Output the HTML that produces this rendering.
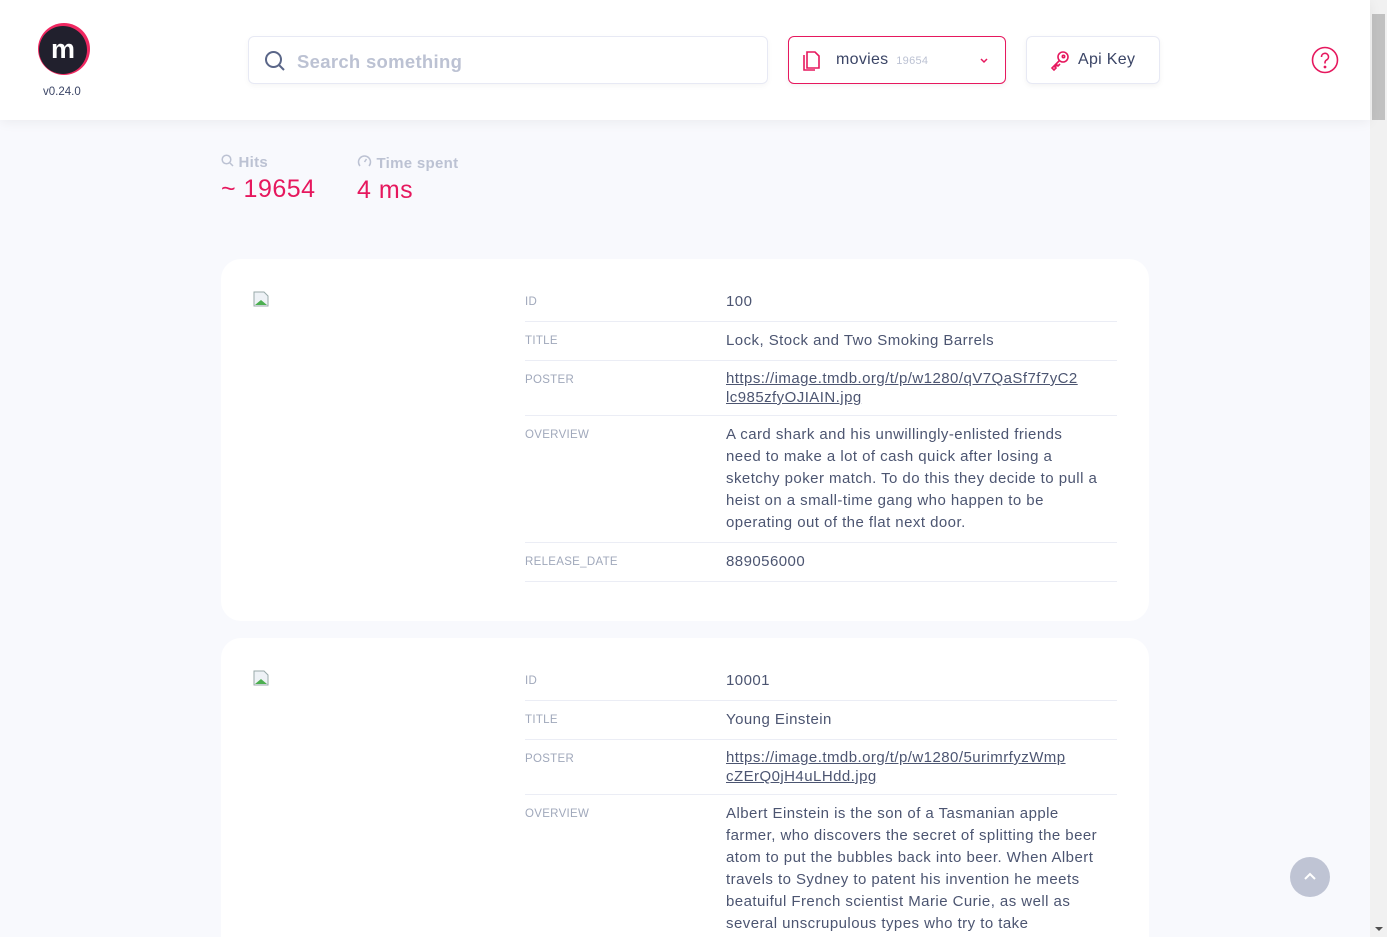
<!DOCTYPE html>
<html><head><meta charset="utf-8"><style>
*{box-sizing:border-box;margin:0;padding:0}
html,body{width:1387px;height:937px;overflow:hidden}
body{background:#f8f9fd;font-family:"Liberation Sans",sans-serif;color:#4c5571;position:relative}
.sb{position:absolute;right:0;top:0;width:17px;height:937px;background:#f1f1f1}
.sb .th{position:absolute;left:2px;top:14px;width:13px;height:106px;background:#c1c1c1}
.hdr{position:absolute;left:0;top:0;width:1370px;height:120px;background:#fff;box-shadow:0 2px 12px rgba(0,0,0,.06);z-index:2}
.logo{position:absolute;left:38px;top:23px;width:52px;height:52px}
.ver{position:absolute;left:43px;top:86px;font-size:11.5px;color:#3b4566}
.search{position:absolute;left:248px;top:36px;width:520px;height:48px;border:1px solid #e7e9f4;border-radius:6px;box-shadow:0 2px 6px rgba(0,0,0,.04)}
.search span{position:absolute;left:48px;top:14px;font-size:18.5px;color:#bcc2d3;font-weight:bold;letter-spacing:.3px}
.idx{position:absolute;left:788px;top:36px;width:218px;height:48px;border:1px solid #e6185e;border-radius:6px;box-shadow:0 2px 6px rgba(0,0,0,.05)}
.api{position:absolute;left:1026px;top:36px;width:134px;height:48px;border:1px solid #e7e9f4;border-radius:6px;box-shadow:0 2px 6px rgba(0,0,0,.05)}
.stat{position:absolute;top:154px}
.stat .l{font-size:15px;color:#bcc2d3;font-weight:bold;letter-spacing:.3px}
.stat .v{font-size:25px;color:#e6185e;margin-top:4px;letter-spacing:.5px}
.card{position:absolute;left:221px;width:928px;background:#fff;border-radius:20px}
.img{position:absolute;left:32px;top:32px;width:16px;height:16px}
table{position:absolute;left:304px;top:24px;width:592px;border-collapse:collapse}
td{border-bottom:1px solid #ebedf5;vertical-align:top;padding:8px 0}
td.k{width:201px;font-size:11.5px;color:#a0a8bb;padding-top:13px;letter-spacing:.3px}
td.v{font-size:15px;line-height:22px;color:#4c5571;white-space:nowrap;letter-spacing:.45px}
a{color:#4c5571;text-decoration:underline}
.up{position:absolute;left:1290px;top:857px;width:40px;height:40px;border-radius:50%;background:#bfc4d4}
</style></head><body>
<div class="hdr">
<svg class="logo" viewBox="0 0 52 52"><circle cx="26" cy="26" r="26" fill="#f02861"/><circle cx="25" cy="27" r="24" fill="#21202d"/><text x="25" y="35" text-anchor="middle" font-family="Liberation Sans" font-weight="bold" font-size="27" fill="#fff">m</text></svg>
<div class="ver">v0.24.0</div>
<div class="search"><svg style="position:absolute;left:15px;top:13px" width="22" height="22" viewBox="0 0 22 22" fill="none" stroke="#5a6688" stroke-width="2"><circle cx="9.5" cy="9.5" r="7.5"/><path d="M15 15l5 5"/></svg><span>Search something</span></div>
<div class="idx"><svg style="position:absolute;left:12px;top:13px" width="20" height="22" viewBox="0 0 20 22" fill="none" stroke="#e6185e" stroke-width="1.6"><path d="M6 2h8l4 4v12H6z"/><path d="M3 5v15h11"/></svg><span style="position:absolute;left:47px;top:14px;font-size:16px;color:#3b4566;letter-spacing:.3px">movies <span style="font-size:11px;color:#bcc2d3;margin-left:3px">19654</span></span><svg style="position:absolute;left:190px;top:20px" width="10" height="7" viewBox="0 0 10 7" fill="none" stroke="#e6185e" stroke-width="1.5"><path d="M2 2l3 3 3-3"/></svg></div>
<div class="api"><svg style="position:absolute;left:22px;top:13px" width="22" height="22" viewBox="0 0 22 22" fill="none" stroke="#e6185e" stroke-width="1.6"><circle cx="14" cy="7" r="5"/><circle cx="14.5" cy="6.5" r="1.2"/><path d="M10 11L3 18l2 2 2-2-1-1 2-2 1 1 2-2"/></svg><span style="position:absolute;left:51px;top:14px;font-size:16px;color:#3b4566;letter-spacing:.3px">Api Key</span></div>
<svg style="position:absolute;left:1311px;top:46px" width="28" height="28" viewBox="0 0 28 28" fill="none" stroke="#e6185e" stroke-width="1.6"><circle cx="14" cy="14" r="12.5"/><path d="M10.5 11a3.5 3.5 0 1 1 5 3c-1 .6-1.5 1.3-1.5 2.5v1"/><circle cx="14" cy="21" r=".6" fill="#e6185e"/></svg>
</div>
<div class="stat" style="left:221px"><div class="l"><svg width="13" height="13" viewBox="0 0 13 13" fill="none" stroke="#bcc2d3" stroke-width="1.5"><circle cx="5.5" cy="5.5" r="4.3"/><path d="M9 9l3 3"/></svg> Hits</div><div class="v">~ 19654</div></div>
<div class="stat" style="left:357px"><div class="l"><svg width="15" height="14" viewBox="0 0 15 14" fill="none" stroke="#bcc2d3" stroke-width="1.5"><path d="M3 12a6 6 0 1 1 9 0"/><path d="M7.5 8l2-3"/></svg> Time spent</div><div class="v">4 ms</div></div>

<div class="card" style="top:259px;height:362px">
<svg class="img" viewBox="0 0 16 16"><path d="M1 1h10l4 4v10H1z" fill="#eef2f6" stroke="#9aa" stroke-width="1"/><path d="M2 14l6-5 6 5z" fill="#4caf50"/></svg>
<table>
<tr><td class="k">ID</td><td class="v">100</td></tr>
<tr><td class="k">TITLE</td><td class="v">Lock, Stock and Two Smoking Barrels</td></tr>
<tr><td class="k">POSTER</td><td class="v" style="line-height:19px"><a>https://image.tmdb.org/t/p/w1280/qV7QaSf7f7yC2<br>lc985zfyOJIAIN.jpg</a></td></tr>
<tr><td class="k">OVERVIEW</td><td class="v">A card shark and his unwillingly-enlisted friends<br>need to make a lot of cash quick after losing a<br>sketchy poker match. To do this they decide to pull a<br>heist on a small-time gang who happen to be<br>operating out of the flat next door.</td></tr>
<tr><td class="k">RELEASE_DATE</td><td class="v">889056000</td></tr>
</table></div>

<div class="card" style="top:638px;height:400px">
<svg class="img" viewBox="0 0 16 16"><path d="M1 1h10l4 4v10H1z" fill="#eef2f6" stroke="#9aa" stroke-width="1"/><path d="M2 14l6-5 6 5z" fill="#4caf50"/></svg>
<table>
<tr><td class="k">ID</td><td class="v">10001</td></tr>
<tr><td class="k">TITLE</td><td class="v">Young Einstein</td></tr>
<tr><td class="k">POSTER</td><td class="v" style="line-height:19px"><a>https://image.tmdb.org/t/p/w1280/5urimrfyzWmp<br>cZErQ0jH4uLHdd.jpg</a></td></tr>
<tr><td class="k">OVERVIEW</td><td class="v">Albert Einstein is the son of a Tasmanian apple<br>farmer, who discovers the secret of splitting the beer<br>atom to put the bubbles back into beer. When Albert<br>travels to Sydney to patent his invention he meets<br>beatuiful French scientist Marie Curie, as well as<br>several unscrupulous types who try to take</td></tr>
</table></div>

<div class="up"><svg style="position:absolute;left:13px;top:14px" width="14" height="10" viewBox="0 0 14 10" fill="none" stroke="#fff" stroke-width="2"><path d="M2 8l5-5 5 5"/></svg></div>
<div class="sb"><div class="th"></div><div style="position:absolute;left:5px;bottom:6px;border:4px solid transparent;border-top:4px solid #505050;border-bottom:0"></div></div>
</body></html>
